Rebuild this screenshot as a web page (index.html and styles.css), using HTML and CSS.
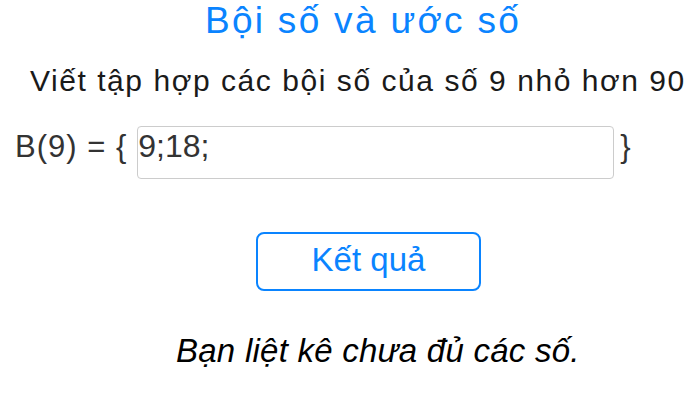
FILE: index.html
```html
<!DOCTYPE html>
<html lang="vi">
<head>
<meta charset="utf-8">
<title>Bội số và ước số</title>
<link rel="stylesheet" href="styles.css">
</head>
<body>
<main class="page">
  <h1 class="title">Bội số và ước số</h1>
  <p class="question">Viết tập hợp các bội số của số 9 nhỏ hơn 90</p>
  <div class="answer-row">
    <span class="label">B(9) = {</span>
    <div class="answer-box">9;18;</div>
    <span class="label close">}</span>
  </div>
  <div class="actions">
    <button class="btn-result" type="button">Kết quả</button>
  </div>
  <p class="feedback">Bạn liệt kê chưa đủ các số.</p>
</main>
</body>
</html>
```
FILE: styles.css
```css
html, body {
  margin: 0;
  padding: 0;
  background: #ffffff;
}
body {
  font-family: "Liberation Sans", Arial, sans-serif;
  width: 700px;
  height: 401px;
  overflow: hidden;
}
.page {
  display: flex;
  flex-direction: column;
  padding: 0 0 0 15px;
}
.title {
  margin: 0;
  font-weight: normal;
  font-size: 37px;
  line-height: 42px;
  letter-spacing: 2.3px;
  color: #0a84ff;
  text-align: center;
  padding-left: 11px;
}
.question {
  margin: 21px 0 0 0;
  font-size: 30px;
  line-height: 36px;
  letter-spacing: 1.55px;
  color: #1a1a1a;
  padding-left: 15px;
  white-space: nowrap;
}
.answer-row {
  display: flex;
  align-items: baseline;
  margin-top: 27px;
}
.label {
  font-size: 31px;
  letter-spacing: 1px;
  color: #333333;
}
.answer-box {
  width: 477px;
  height: 53px;
  margin: 0 6px 0 10px;
  border: 1px solid #cccccc;
  border-radius: 4px;
  font-size: 32px;
  line-height: 32px;
  color: #333333;
  padding: 3px 0 0 0;
  box-sizing: border-box;
}
.actions {
  display: flex;
  margin-top: 53px;
  padding-left: 241px;
}
.btn-result {
  width: 225px;
  height: 59px;
  border: 2px solid #0a84ff;
  border-radius: 8px;
  background: #ffffff;
  color: #0a84ff;
  font-family: "Liberation Sans", Arial, sans-serif;
  font-size: 33px;
  padding: 0 0 4px 0;
}
.feedback {
  margin: 41px 0 0 0;
  font-size: 33px;
  letter-spacing: 0.25px;
  font-style: italic;
  color: #000000;
  padding-left: 161px;
}
```
